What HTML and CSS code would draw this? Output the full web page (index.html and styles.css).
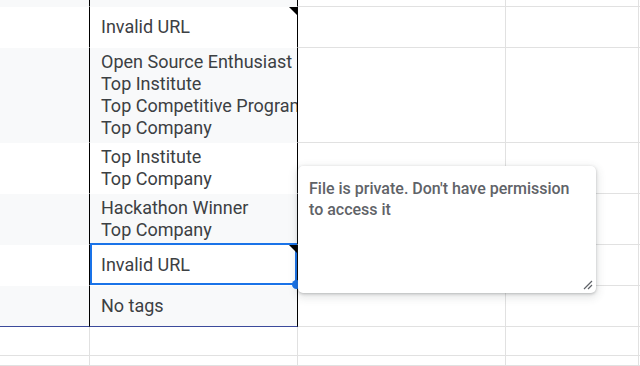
FILE: index.html
```html
<!DOCTYPE html>
<html lang="en">
  <head>
    <meta charset="UTF-8" />
    <title>Sheet</title>
    <link rel="stylesheet" href="styles.css">
  </head>
  <body>
    <div class="sheet">
      <div class="grid">
        <!-- row 0 -->
        <div class="cell band edge"></div>
        <div class="cell band edge"></div>
        <div class="cell"></div>
        <div class="cell"></div>
        <div class="cell"></div>
        <!-- row 1 -->
        <div class="cell edge"></div>
        <div class="cell edge note"><span>Invalid URL</span></div>
        <div class="cell"></div>
        <div class="cell"></div>
        <div class="cell"></div>
        <!-- row 2 -->
        <div class="cell band edge"></div>
        <div class="cell band edge">
          <span>Open Source Enthusiast<br>Top Institute<br>Top Competitive Programmer<br>Top Company</span>
        </div>
        <div class="cell"></div>
        <div class="cell"></div>
        <div class="cell"></div>
        <!-- row 3 -->
        <div class="cell edge"></div>
        <div class="cell edge"><span>Top Institute<br>Top Company</span></div>
        <div class="cell"></div>
        <div class="cell"></div>
        <div class="cell"></div>
        <!-- row 4 -->
        <div class="cell band edge"></div>
        <div class="cell band edge"><span>Hackathon Winner<br>Top Company</span></div>
        <div class="cell"></div>
        <div class="cell"></div>
        <div class="cell"></div>
        <!-- row 5 -->
        <div class="cell edge"></div>
        <div class="cell edge note active">
          <span>Invalid URL</span>
          <div class="selection"></div>
          <div class="handle"></div>
        </div>
        <div class="cell"></div>
        <div class="cell"></div>
        <div class="cell"></div>
        <!-- row 6 -->
        <div class="cell band edge last"></div>
        <div class="cell band edge last"><span>No tags</span></div>
        <div class="cell"></div>
        <div class="cell"></div>
        <div class="cell"></div>
        <!-- row 7 -->
        <div class="cell"></div>
        <div class="cell"></div>
        <div class="cell"></div>
        <div class="cell"></div>
        <div class="cell"></div>
        <!-- row 8 -->
        <div class="cell"></div>
        <div class="cell"></div>
        <div class="cell"></div>
        <div class="cell"></div>
        <div class="cell"></div>
      </div>

      <div class="comment">
        <p>File is private. Don't have permission to access it</p>
        <svg class="resize" width="10" height="10" viewBox="0 0 10 10">
          <path d="M1 9 L9 1 M5 9 L9 5" stroke="#5f6368" stroke-width="1.2" fill="none" />
        </svg>
      </div>
    </div>
  </body>
</html>
```

FILE: styles.css
```css
body {
  margin: 0;
  padding: 0;
  background-color: #ffffff;
  font-family: Roboto, "Liberation Sans", Arial, sans-serif;
  overflow: hidden;
}
.sheet {
  position: relative;
  width: 640px;
  height: 366px;
  overflow: hidden;
}
.grid {
  display: grid;
  grid-template-columns: 90px 208px 208px 133px 1fr;
  grid-template-rows: 7px 41px 95px 51px 51px 41px 41px 29px 1fr;
  height: 100%;
}
.cell {
  box-sizing: border-box;
  border-right: 1px solid #e1e1e1;
  border-bottom: 1px solid #e1e1e1;
  display: flex;
  align-items: center;
  padding-left: 11px;
  font-size: 18px;
  line-height: 22px;
  color: #3c4043;
  white-space: nowrap;
  overflow: hidden;
  position: relative;
}
.cell.band {
  background-color: #f8f9fa;
}
.cell.edge {
  border-right-color: #000000;
  border-bottom-color: transparent;
}
.cell.edge.last {
  border-bottom-color: #3c4a9b;
}
.cell span {
  display: block;
}
.note::after {
  content: "";
  position: absolute;
  top: 0;
  right: 0;
  width: 8px;
  height: 8px;
  background-color: #000000;
  clip-path: polygon(0 0, 100% 0, 100% 100%);
  z-index: 3;
}
.active {
  overflow: visible;
  z-index: 2;
}
.selection {
  position: absolute;
  top: -2px;
  left: 0;
  width: 207px;
  height: 42px;
  box-sizing: border-box;
  border: 2px solid #1a73e8;
}
.handle {
  position: absolute;
  left: 202px;
  top: 35px;
  width: 9px;
  height: 9px;
  border-radius: 50%;
  background-color: #1a73e8;
}
.comment {
  position: absolute;
  left: 298px;
  top: 166px;
  width: 298px;
  height: 127px;
  box-sizing: border-box;
  padding: 12px 14px 0 11px;
  background-color: #ffffff;
  border-radius: 5px;
  box-shadow: 0 1px 3px rgba(60, 64, 67, 0.3), 0 3px 8px 2px rgba(60, 64, 67, 0.12);
  z-index: 5;
}
.comment p {
  margin: 0;
  font-size: 16px;
  line-height: 21px;
  font-weight: 500;
  color: #5f6368;
}
.resize {
  position: absolute;
  right: 3px;
  bottom: 3px;
}
```
